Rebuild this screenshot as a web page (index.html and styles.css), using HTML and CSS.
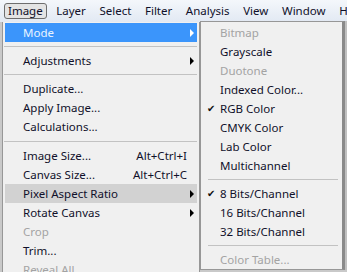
FILE: index.html
```html
<!DOCTYPE html>
<html lang="en">
<head>
  <meta charset="UTF-8">
  <title>Image menu</title>
  <link rel="stylesheet" href="styles.css">
</head>
<body>
  <!-- Menu bar -->
  <div class="menubar">
    <span class="top open">Image</span>
    <span class="top">Layer</span>
    <span class="top">Select</span>
    <span class="top">Filter</span>
    <span class="top">Analysis</span>
    <span class="top">View</span>
    <span class="top">Window</span>
    <span class="top">Help</span>
  </div>

  <div class="menus">
    <!-- Image menu -->
    <ul class="menu main">
      <li class="item hot">Mode<i class="arrow"></i></li>
      <li class="sep"></li>
      <li class="item">Adjustments<i class="arrow"></i></li>
      <li class="sep"></li>
      <li class="item">Duplicate...</li>
      <li class="item">Apply Image...</li>
      <li class="item">Calculations...</li>
      <li class="sep"></li>
      <li class="item">Image Size...<span class="key">Alt+Ctrl+I</span></li>
      <li class="item">Canvas Size...<span class="key">Alt+Ctrl+C</span></li>
      <li class="item over">Pixel Aspect Ratio<i class="arrow"></i></li>
      <li class="item">Rotate Canvas<i class="arrow"></i></li>
      <li class="item off">Crop</li>
      <li class="item">Trim...</li>
      <li class="item off">Reveal All</li>
    </ul>

    <!-- Mode submenu -->
    <ul class="menu sub">
      <li class="item off">Bitmap</li>
      <li class="item">Grayscale</li>
      <li class="item off">Duotone</li>
      <li class="item">Indexed Color...</li>
      <li class="item checked">RGB Color</li>
      <li class="item">CMYK Color</li>
      <li class="item">Lab Color</li>
      <li class="item">Multichannel</li>
      <li class="sep"></li>
      <li class="item checked">8 Bits/Channel</li>
      <li class="item">16 Bits/Channel</li>
      <li class="item">32 Bits/Channel</li>
      <li class="sep"></li>
      <li class="item off">Color Table...</li>
    </ul>
  </div>
</body>
</html>
```

FILE: styles.css
```css
* {
  margin: 0;
  padding: 0;
  box-sizing: border-box;
}
body {
  font-family: "Noto Sans", sans-serif;
  font-size: 11.5px;
  color: #10102a;
  background: #c9c9c9;
  overflow: hidden;
}
/* Menu bar */
.menubar {
  height: 22px;
  display: flex;
  align-items: center;
  gap: 5.6px;
  padding-left: 4px;
  background: linear-gradient(#f4f7fb, #e2e9f3);
  white-space: nowrap;
}
.top {
  padding: 0 3px;
  height: 16px;
  line-height: 14px;
  border: 1px solid transparent;
  border-radius: 3px;
}
.top.open {
  border-color: #6e6e6e;
  background: #e4e4e4;
}
/* Menus */
.menus {
  display: flex;
  align-items: flex-start;
  padding-left: 2px;
}
.menu {
  list-style: none;
  background: #f0f0f0;
  border: 1px solid #979797;
  padding: 1px 2px;
}
.main {
  width: 198px;
  border-top: none;
}
.sub {
  width: 145px;
  margin-top: -1px;
  padding: 1px 2px 0 3px;
  border-right: 3px solid #8a8a8a;
  box-shadow: 2px 0 0 #c0c0c0;
}
.item {
  position: relative;
  height: 19px;
  line-height: 19px;
  padding-left: 18px;
  white-space: nowrap;
}
.sub .item {
  padding-left: 16px;
}
.item.hot {
  background: #3b95fb;
  color: #eaf4ff;
}
.item.over {
  background: #d2d2d2;
}
.item.off {
  color: #a3a3a3;
}
.key {
  position: absolute;
  right: 10px;
}
.arrow {
  position: absolute;
  right: 3px;
  top: 6px;
  border-left: 4px solid #000;
  border-top: 4px solid transparent;
  border-bottom: 4px solid transparent;
}
.hot .arrow {
  border-left-color: #fff;
}
.checked::before {
  content: "\2714";
  position: absolute;
  left: 3px;
  font-family: "DejaVu Sans", sans-serif;
  font-size: 10px;
  color: #111;
}
.sep {
  height: 9px;
  margin: 0 0 0 -1px;
  border-bottom: 1px solid #c2c2c2;
  transform: translateY(-4px);
}
.main .sep:nth-child(8) {
  height: 10px;
}
.sub .sep {
  margin-left: 4px;
  margin-right: 2px;
}
```
